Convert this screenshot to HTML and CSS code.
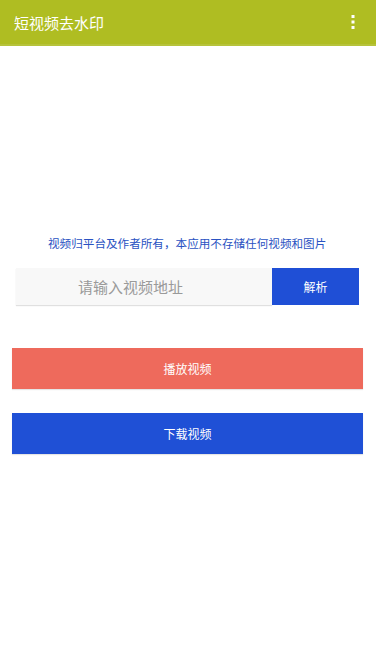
FILE: index.html
```html
<!DOCTYPE html>
<html lang="zh">
<head>
<meta charset="utf-8">
<title>短视频去水印</title>
<link rel="stylesheet" href="styles.css">
</head>
<body>
<header class="appbar">
  <h1 class="title">短视频去水印</h1>
  <button class="menu" aria-label="更多">
    <svg width="4" height="14" viewBox="0 0 4 14"><rect x="0.5" y="0" width="3" height="3" fill="#fff"/><rect x="0.5" y="5.5" width="3" height="3" fill="#fff"/><rect x="0.5" y="11" width="3" height="3" fill="#fff"/></svg>
  </button>
</header>
<main class="content">
  <p class="notice">视频归平台及作者所有，本应用不存储任何视频和图片</p>
  <div class="parse-row">
    <input class="url-input" type="text" placeholder="请输入视频地址">
    <button class="parse-btn">解析</button>
  </div>
  <button class="action play">播放视频</button>
  <button class="action download">下载视频</button>
</main>
</body>
</html>
```
FILE: styles.css
```css
* { box-sizing: border-box; }
html, body { margin: 0; padding: 0; background: #fff; }
body {
  font-family: "Noto Sans CJK SC", "Noto Sans", sans-serif;
  width: 376px;
  height: 669px;
  overflow: hidden;
}
.appbar {
  height: 46px;
  background: #afbd22;
  display: flex;
  align-items: center;
  justify-content: space-between;
  padding: 0 0 0 14px;
  border-bottom: 2px solid #b6c33a;
}
.title {
  margin: 0;
  font-size: 15px;
  font-weight: 400;
  color: #fff;
  line-height: 1;
  margin-top: 1px;
}
.menu {
  border: 0;
  background: transparent;
  padding: 0;
  width: 46px;
  height: 44px;
  display: flex;
  align-items: center;
  justify-content: center;
  margin-right: 0;
}
.menu svg { display: block; }
.content {
  display: flex;
  flex-direction: column;
}
.notice {
  margin: 190px 0 0 48px;
  font-size: 11.6px;
  line-height: 14px;
  color: #2a52c2;
}
.parse-row {
  display: flex;
  margin: 18px 0 0 16px;
  width: 343px;
  height: 37px;
}
.url-input {
  flex: 0 0 256px;
  height: 37px;
  border: 0;
  outline: none;
  background: #f8f8f8;
  box-shadow: 0 1px 1px rgba(0,0,0,0.12);
  padding: 0 0 0 62px;
  font-family: inherit;
  font-size: 15px;
  color: #333;
}
.url-input::placeholder { color: #9a9a9a; }
.parse-btn {
  flex: 1;
  border: 0;
  background: #1f4fd6;
  color: #fff;
  font-family: inherit;
  font-size: 12px;
  padding: 0;
  height: 37px;
}
.action {
  border: 0;
  margin: 0 0 0 12px;
  width: 351px;
  height: 41px;
  color: #fff;
  font-family: inherit;
  font-size: 12px;
  padding: 0;
  box-shadow: 0 1px 1px rgba(0,0,0,0.1);
}
.play { margin-top: 43px; background: #ee6a5c; }
.download { margin-top: 24px; background: #1f50d6; }
```
